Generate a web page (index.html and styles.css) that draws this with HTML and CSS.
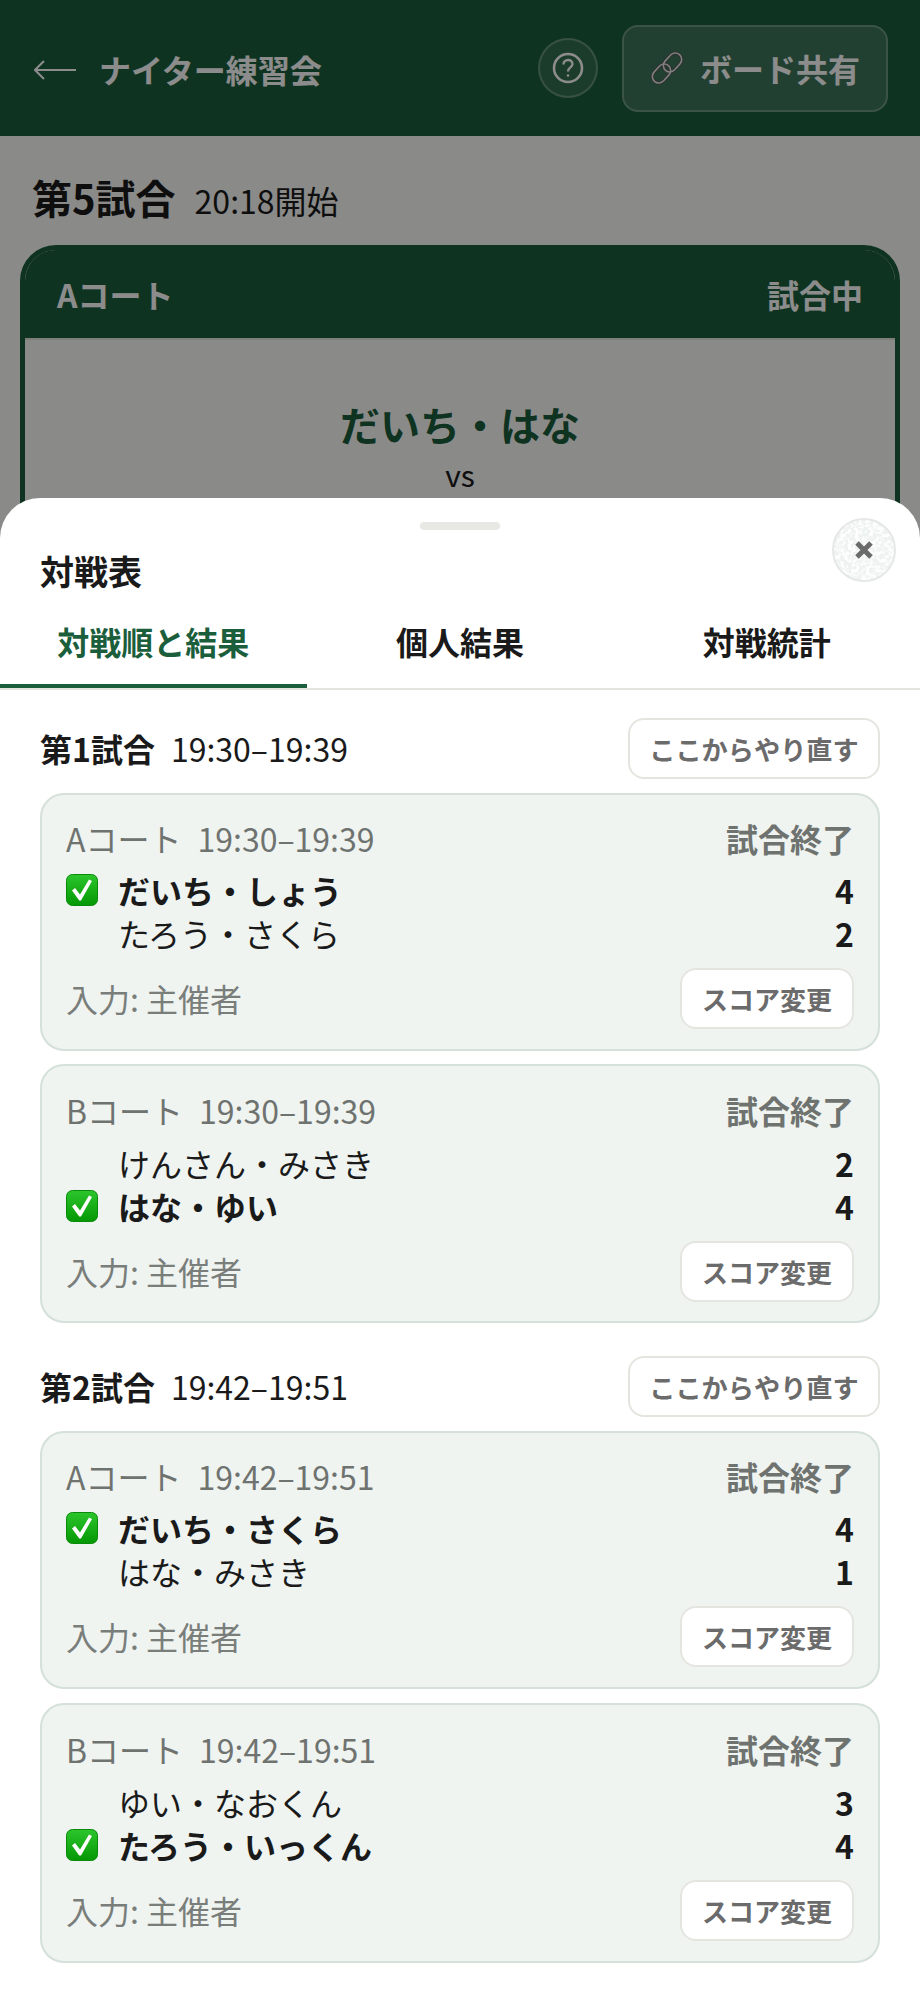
FILE: index.html
```html
<!DOCTYPE html>
<html lang="ja">
<head>
  <meta charset="UTF-8">
  <meta name="viewport" content="width=device-width, initial-scale=1.0">
  <title>ナイター練習会</title>
  <link rel="stylesheet" href="styles.css">
</head>
<body>
  <svg class="defs" width="0" height="0">
    <defs>
      <linearGradient id="check-bg" x1="0" y1="0" x2="0" y2="1">
        <stop offset="0" stop-color="#2cc52c"/>
        <stop offset="1" stop-color="#049804"/>
      </linearGradient>
      <filter id="speckle" x="0" y="0" width="100%" height="100%">
        <feTurbulence type="fractalNoise" baseFrequency="0.28" numOctaves="2" seed="4"/>
        <feColorMatrix values="0 0 0 0 1  0 0 0 0 1  0 0 0 0 1  3 3 0 0 -2.6"/>
      </filter>
      <symbol id="check" viewBox="0 0 32 32">
        <rect x="0.5" y="0.5" width="31" height="31" rx="6" fill="url(#check-bg)" stroke="#0a8a0a"/>
        <path d="M6 16.500l3-2.500 5 6.500 9-15 3 1.600-11 19.400h-1.800z" fill="#fff"/>
      </symbol>
    </defs>
  </svg>

  <!-- Header -->
  <header class="topbar">
    <svg class="back" width="42" height="22" viewBox="0 0 42 22" fill="none" stroke="#fff" stroke-width="2">
      <path d="M1 11h41M10 2l-9 9 9 9"/>
    </svg>
    <div class="topbar-title">ナイター練習会</div>
    <div class="help">
      <svg width="32" height="32" viewBox="0 0 32 32" fill="none" stroke="#fff" stroke-width="2.6">
        <circle cx="16" cy="16" r="14"/>
        <path d="M11.500 12.500c0-2.800 2-4.500 4.600-4.500s4.400 1.700 4.400 4c0 3.400-4.500 3.500-4.500 7.500" stroke-width="2.400"/>
        <circle cx="16" cy="23.500" r="1.300" fill="#fff" stroke="none"/>
      </svg>
    </div>
    <div class="share">
      <svg width="34" height="34" viewBox="0 0 34 34" fill="none">
        <g stroke="#555" stroke-width="3.200">
          <rect x="-6.500" y="-10.500" width="13" height="21" rx="6.500" transform="translate(22.500 11.500) rotate(42)"/>
          <rect x="-6.500" y="-10.500" width="13" height="21" rx="6.500" transform="translate(11.500 22.500) rotate(42)"/>
        </g>
        <g stroke="#e8e8e8" stroke-width="1.600">
          <rect x="-6.500" y="-10.500" width="13" height="21" rx="6.500" transform="translate(22.500 11.500) rotate(42)"/>
          <rect x="-6.500" y="-10.500" width="13" height="21" rx="6.500" transform="translate(11.500 22.500) rotate(42)"/>
        </g>
      </svg>
      <span>ボード共有</span>
    </div>
  </header>

  <!-- Current match -->
  <main class="current">
    <div class="current-head">
      <span class="current-no">第5試合</span>
      <span class="current-time">20:18開始</span>
    </div>
    <section class="court">
      <div class="court-head">
        <span>Aコート</span>
        <span>試合中</span>
      </div>
      <div class="court-body">
        <div class="court-name">だいち・はな</div>
        <div class="court-vs">vs</div>
      </div>
    </section>
  </main>

  <div class="overlay"></div>

  <!-- Bottom sheet -->
  <aside class="sheet">
    <div class="handle"></div>
    <button class="close">
      <svg class="noise" width="60" height="60"><rect width="60" height="60" filter="url(#speckle)"/></svg>
      <svg class="close-x" width="20" height="20" viewBox="0 0 20 20" stroke="#6b6b6b" stroke-width="5">
        <path d="M3 3l14 14M17 3L3 17"/>
      </svg>
    </button>
    <h2 class="sheet-title">対戦表</h2>

    <div class="tabs">
      <div class="tab active">対戦順と結果</div>
      <div class="tab">個人結果</div>
      <div class="tab">対戦統計</div>
    </div>

    <div class="rounds">
      <div class="round-head">
        <div class="round-label"><span class="round-no">第1試合</span><span class="round-time">19:30–19:39</span></div>
        <button class="btn">ここからやり直す</button>
      </div>

      <div class="match">
        <div class="match-top">
          <div class="match-court">Aコート<span>19:30–19:39</span></div>
          <div class="match-state">試合終了</div>
        </div>
        <div class="team win">
          <svg width="32" height="32"><use href="#check"/></svg>
          <span>だいち・しょう</span>
          <b>4</b>
        </div>
        <div class="team">
          <i></i>
          <span>たろう・さくら</span>
          <b>2</b>
        </div>
        <div class="match-foot">
          <span>入力: 主催者</span>
          <button class="btn">スコア変更</button>
        </div>
      </div>

      <div class="match second-won">
        <div class="match-top">
          <div class="match-court">Bコート<span>19:30–19:39</span></div>
          <div class="match-state">試合終了</div>
        </div>
        <div class="team">
          <i></i>
          <span>けんさん・みさき</span>
          <b>2</b>
        </div>
        <div class="team win">
          <svg width="32" height="32"><use href="#check"/></svg>
          <span>はな・ゆい</span>
          <b>4</b>
        </div>
        <div class="match-foot">
          <span>入力: 主催者</span>
          <button class="btn">スコア変更</button>
        </div>
      </div>

      <div class="round-head second">
        <div class="round-label"><span class="round-no">第2試合</span><span class="round-time">19:42–19:51</span></div>
        <button class="btn">ここからやり直す</button>
      </div>

      <div class="match">
        <div class="match-top">
          <div class="match-court">Aコート<span>19:42–19:51</span></div>
          <div class="match-state">試合終了</div>
        </div>
        <div class="team win">
          <svg width="32" height="32"><use href="#check"/></svg>
          <span>だいち・さくら</span>
          <b>4</b>
        </div>
        <div class="team">
          <i></i>
          <span>はな・みさき</span>
          <b>1</b>
        </div>
        <div class="match-foot">
          <span>入力: 主催者</span>
          <button class="btn">スコア変更</button>
        </div>
      </div>

      <div class="match second-won">
        <div class="match-top">
          <div class="match-court">Bコート<span>19:42–19:51</span></div>
          <div class="match-state">試合終了</div>
        </div>
        <div class="team">
          <i></i>
          <span>ゆい・なおくん</span>
          <b>3</b>
        </div>
        <div class="team win">
          <svg width="32" height="32"><use href="#check"/></svg>
          <span>たろう・いっくん</span>
          <b>4</b>
        </div>
        <div class="match-foot">
          <span>入力: 主催者</span>
          <button class="btn">スコア変更</button>
        </div>
      </div>
    </div>
  </aside>
</body>
</html>
```

FILE: styles.css
```css
/* General Styles */
html, body {
  margin: 0;
  height: 1990px;
  overflow: hidden;
}

body {
  position: relative;
  font-family: "Noto Sans CJK JP", "Noto Sans", sans-serif;
  background-color: #fbfbfa;
  color: #1a1a1a;
}

.defs {
  position: absolute;
}

button {
  font-family: inherit;
}

/* Header */
.topbar {
  height: 136px;
  background-color: #1b5e3c;
  color: #ffffff;
  display: flex;
  align-items: center;
  padding: 0 32px 0 34px;
  box-sizing: border-box;
}

.back {
  flex: none;
  margin-right: 23px;
  margin-top: 4px;
}

.topbar-title {
  flex: 1;
  font-size: 32px;
  font-weight: 700;
  line-height: 44px;
  margin-top: 2px;
}

.help {
  width: 60px;
  height: 60px;
  box-sizing: border-box;
  border: 2px solid rgba(255, 255, 255, 0.25);
  border-radius: 50%;
  background-color: rgba(255, 255, 255, 0.1);
  display: flex;
  align-items: center;
  justify-content: center;
  margin-right: 24px;
}

.share {
  width: 266px;
  height: 87px;
  box-sizing: border-box;
  border: 2px solid rgba(255, 255, 255, 0.25);
  border-radius: 16px;
  background-color: rgba(255, 255, 255, 0.15);
  display: flex;
  align-items: center;
  padding-left: 26px;
  gap: 16px;
  font-size: 32px;
  font-weight: 700;
}

/* Current match */
.current-head {
  display: flex;
  align-items: baseline;
  padding: 33px 32px 0;
  height: 76px;
}

.current-no {
  font-size: 40px;
  font-weight: 700;
  line-height: 56px;
}

.current-time {
  font-size: 32px;
  line-height: 56px;
  margin-left: 19px;
}

.court {
  margin: 0 20px;
  border: 5px solid #1b5e3c;
  border-radius: 36px;
  overflow: hidden;
}

.court-head {
  height: 88px;
  background-color: #1b5e3c;
  color: #ffffff;
  display: flex;
  justify-content: space-between;
  align-items: center;
  padding: 0 32px;
  font-size: 32px;
  font-weight: 700;
  border-bottom: 2px solid #e5e5e0;
}

.court-body {
  text-align: center;
  height: 300px;
  padding-top: 56px;
  box-sizing: border-box;
}

.court-name {
  font-size: 40px;
  font-weight: 700;
  line-height: 56px;
  color: #1b5e3c;
}

.court-vs {
  font-size: 30px;
  line-height: 44px;
}

.overlay {
  position: absolute;
  inset: 0;
  background-color: rgba(0, 0, 0, 0.45);
}

/* Bottom sheet */
.sheet {
  position: absolute;
  top: 498px;
  left: 0;
  right: 0;
  bottom: 0;
  background-color: #ffffff;
  border-radius: 40px 40px 0 0;
}

.handle {
  width: 80px;
  height: 8px;
  border-radius: 4px;
  background-color: #e8e8e4;
  margin: 24px auto 0;
}

.close {
  position: absolute;
  top: 20px;
  right: 24px;
  width: 64px;
  height: 64px;
  padding: 0;
  border: 2px solid #e5e8e5;
  border-radius: 50%;
  background-color: #eef2f0;
  overflow: hidden;
  display: flex;
  align-items: center;
  justify-content: center;
}

.noise {
  position: absolute;
  top: 0;
  left: 0;
}

.close-x {
  position: relative;
}

.sheet-title {
  margin: 17px 0 2px 40px;
  font-size: 34px;
  font-weight: 700;
  line-height: 48px;
}

/* Tabs */
.tabs {
  display: grid;
  grid-template-columns: repeat(3, 1fr);
  border-bottom: 2px solid #e5e5e0;
}

.tab {
  height: 91px;
  box-sizing: border-box;
  border-bottom: 4px solid transparent;
  display: flex;
  align-items: center;
  justify-content: center;
  font-size: 32px;
  font-weight: 700;
}

.tab.active {
  color: #1b5e3c;
  border-bottom-color: #1b5e3c;
}

/* Rounds */
.rounds {
  padding: 28px 40px 0;
}

.round-head {
  display: flex;
  justify-content: space-between;
  align-items: center;
  height: 61px;
  margin-bottom: 14px;
}

.round-head.second {
  margin-top: 33px;
}

.round-label {
  padding-bottom: 2px;
}

.round-no {
  font-size: 32px;
  font-weight: 700;
}

.round-time {
  font-size: 32px;
  margin-left: 16px;
}

.btn {
  width: 174px;
  height: 61px;
  padding: 0;
  box-sizing: border-box;
  border: 2px solid #e5e5e0;
  border-radius: 16px;
  background-color: #ffffff;
  color: #6b6b6b;
  font-size: 26px;
  font-weight: 700;
}

.round-head .btn {
  width: 252px;
  font-size: 26.200px;
}

/* Match cards */
.match {
  background-color: #eff4f1;
  border: 2px solid #d5e0da;
  border-radius: 24px;
  padding: 24px 24px 20px;
  margin-bottom: 13px;
}

.match:last-child {
  margin-top: 14px;
}

.match.second-won {
  padding-top: 25px;
  padding-bottom: 19px;
}

.match:last-child.second-won {
  padding-bottom: 20px;
}

.match-top {
  display: flex;
  justify-content: space-between;
  align-items: center;
  height: 38px;
  margin-bottom: 10px;
  color: #6f7370;
  font-size: 32px;
}

.second-won .match-top {
  margin-bottom: 11px;
}

.match-court span {
  margin-left: 16px;
}

.match-state {
  font-weight: 700;
}

.team {
  display: grid;
  grid-template-columns: 32px 1fr auto;
  column-gap: 20px;
  align-items: center;
  height: 43px;
  font-size: 32px;
}

.team.win span {
  font-weight: 700;
}

.team b {
  font-weight: 700;
}

.match-foot {
  display: flex;
  justify-content: space-between;
  align-items: center;
  margin-top: 15px;
  color: #7a7e7b;
  font-size: 32px;
}

.match-foot span {
  padding-bottom: 2px;
}
```
